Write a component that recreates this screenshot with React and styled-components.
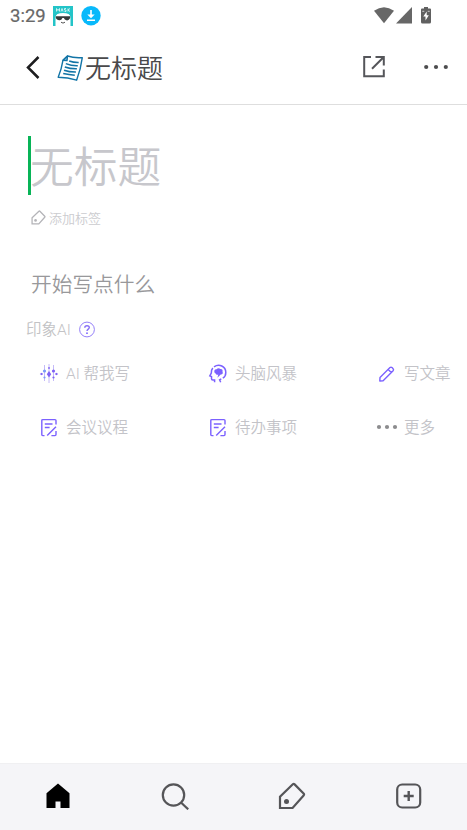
import styled, { createGlobalStyle } from 'styled-components';
import React from 'react';

const TagIcon = ({ size, color, stroke = 2.2 }) => (
  <svg width={size} height={size} viewBox="0 0 28 28" fill="none">
    <path
      d="M2 26V14.6L14.8 2.3Q15.7 1.5 16.6 2.4L25.6 11.6Q26.5 12.6 25.6 13.5L14.6 26Z"
      stroke={color}
      strokeWidth={stroke}
    />
    <circle cx="8.5" cy="19.5" r="2.5" fill={color} />
  </svg>
);

const DotsIcon = ({ width, gap, r, color }) => (
  <svg width={width} height="8" viewBox={`0 0 ${width} 8`} fill={color}>
    {[-1, 0, 1].map((i) => (
      <circle key={i} cx={width / 2 + i * gap} cy="4" r={r} />
    ))}
  </svg>
);

const SparkIcon = () => (
  <svg width="20" height="20" viewBox="0 0 20 20">
    <g stroke="#c4baf8" strokeWidth="1">
      <path d="M5.5 2V18M10 1V20M14.5 2V18" />
    </g>
    <g fill="#7f62f4">
      <path d="M10 8L12.2 11.2L10 14.4L7.8 11.2Z" />
      <path d="M0.8 11L2.6 9.8L4.2 11L2.6 12.2Z" />
      <path d="M15.8 11L17.4 9.8L19.2 11L17.4 12.2Z" />
      <circle cx="14.5" cy="8" r="1.6" />
      <circle cx="14.5" cy="14.5" r="1.1" />
      <circle cx="10" cy="5" r="0.9" />
    </g>
    <g fill="#7a9af8">
      <circle cx="5.5" cy="8" r="1.6" />
      <circle cx="5.5" cy="14.5" r="1.1" />
    </g>
  </svg>
);

const BrainIcon = () => (
  <svg width="20" height="20" viewBox="0 0 20 20" fill="none" stroke="#7b61ff" strokeWidth="1.5">
    <path d="M6.6 19.2V17H4.8Q3.5 17 3.5 15.5V13.5L1.8 12.8L3.3 10Q3.2 7 4.8 5.1M6 3.9C11 0.3 17.8 3.3 17.8 9.5C17.8 12.3 16.6 14.2 14.8 15.2M13.3 15.9L11.6 16.8L12.7 19.2" />
    <path
      d="M6.4 9C5.8 7.1 7.4 5.9 8.6 6.3C9.6 4.9 11.6 5.1 12.3 6.1C14 5.8 15.1 7.3 14.5 8.7C15.4 10.2 14.2 11.8 12.7 11.5L9.4 14.8L10.3 11.6C9 12.1 7.9 11.4 7.9 10.5C7 10.5 6.5 9.9 6.4 9Z"
      fill="#7b61ff"
      stroke="none"
    />
  </svg>
);

const NoteIcon = () => (
  <svg width="18" height="20" viewBox="0 0 18 20" fill="none" stroke="#7b61ff" strokeWidth="1.4">
    <path d="M4.5 18.6H2.8Q1.8 18.6 1.8 17.6V3.6Q1.8 2.6 2.8 2.6H15Q16 2.6 16 3.6V7.4" />
    <path d="M4.8 7H12.5M4.8 10.5H9.6M7.2 18.6L16 9.8M11.4 18.6H15Q16 18.6 16 17.6V14" />
  </svg>
);

const PencilIcon = () => (
  <svg width="18" height="20" viewBox="0 0 18 20" fill="none" stroke="#7b61ff" strokeWidth="1.4" strokeLinejoin="round">
    <path d="M2 14.6L12 4.6Q13 3.7 14 4.6L15.1 5.7Q16 6.7 15.1 7.7L5.1 17.7L1.8 18ZM10.2 6.4L13.3 9.5" />
  </svg>
);

const HelpIcon = () => (
  <svg width="18" height="18" viewBox="0 0 18 18" fill="none" stroke="#8870f7">
    <circle cx="9" cy="9.5" r="7.4" strokeWidth="0.9" />
    <path d="M6.8 7.7C6.8 6.4 7.7 5.7 9 5.7S11.3 6.5 11.3 7.6C11.3 9 9 9.2 9 10.9" strokeWidth="1.4" />
    <circle cx="9" cy="13.2" r="0.9" fill="#7b61ff" stroke="none" />
  </svg>
);

const MemoIcon = () => (
  <svg width="28" height="28" viewBox="0 0 28 28" fill="none" stroke="#1274a6" strokeWidth="1.4" strokeLinejoin="round">
    <path d="M10.5 2Q17 4.2 25.3 3.6Q23.8 15 19.6 26.2Q11 23.2 1.2 23.2Q4.6 15 6 6.2Z" />
    <path d="M10.5 2L10 6.6L6 6.2Z" fill="#8fc5de" />
    <path d="M12.2 7Q16.5 8.6 21.7 8.5M8.8 9.6Q14.5 11.9 20.8 11.7M7.8 13Q13.5 15 19.9 14.8M7 16.2Q12.5 18.1 18.9 18M6.2 19.4Q12 20.7 17.8 21.2" strokeWidth="1.5" />
  </svg>
);

const ACTIONS = [
  { label: 'AI 帮我写', icon: <SparkIcon /> },
  { label: '头脑风暴', icon: <BrainIcon /> },
  { label: '写文章', icon: <PencilIcon /> },
  { label: '会议议程', icon: <NoteIcon /> },
  { label: '待办事项', icon: <NoteIcon /> },
  { label: '更多', icon: <DotsIcon width={24} gap={8} r={2.1} color="#8c8c8e" /> },
];

const App = () => {
  return (
    <>
      <GlobalStyle />
      <Screen>
        <StatusBar>
          <Clock>3:29</Clock>
          <svg width="20" height="20" viewBox="0 0 20 20">
            <path d="M0 0H20V20H17.5V11Q17 7 10 7T2.5 11V20H0Z" fill="#23c4c8" />
            <path d="M3 20V11Q5 6 6 9Q10 7 14 9Q15 6 17 11V20Z" fill="#fff" />
            <path d="M3.5 5.5V2.5L5 4.5L6.5 2.5V5.5M8 5.5L9 2.5L10 5.5M13 2.5H11.5V4H13V5.5H11.5M15 2.5V5.5M17 2.5L15 4L17 5.5" stroke="#d7f5f5" strokeWidth="0.9" fill="none" />
            <path d="M2.8 10.2H17.2V12Q15.8 14.8 13.4 14.3Q11.4 14 10.9 12H9.4Q8.5 14.7 6 14.3Q3.6 14 2.8 12Z" fill="#343b3c" />
            <path d="M8 16.2Q10 18 12 16.2" stroke="#555" fill="none" />
          </svg>
          <svg width="20" height="20" viewBox="0 0 20 20" fill="none" stroke="#fff">
            <circle cx="10" cy="9.7" r="9.7" fill="#08b9fb" stroke="none" />
            <path d="M10 4V10.5M6 14.2H14" strokeWidth="1.6" />
            <path d="M6.3 8.5H13.7L10 12.2Z" fill="#fff" stroke="none" />
          </svg>
          <Signals>
            <svg width="20" height="17" viewBox="0 0 20 17" fill="#676767">
              <path d="M0 3.8Q10-3.2 20 3.8L10 16.2Z" />
            </svg>
            <svg width="16" height="17" viewBox="0 0 16 17" fill="#676767">
              <path d="M16 0V16.5H0Z" />
            </svg>
            <Battery width="10" height="17" viewBox="0 0 10 17">
              <path d="M0 2.5Q0 1.5 1 1.5H3V0H7V1.5H9Q10 1.5 10 2.5V15Q10 16.5 8.5 16.5H1.5Q0 16.5 0 15Z" fill="#606060" />
              <path d="M1.3 4.3H3.3M6.7 4.3H8.7" stroke="#ccc" />
              <path d="M5.7 4.5L2.3 9.6H4.5V13.5L7.8 8.2H5.7Z" fill="#fff" />
            </Battery>
          </Signals>
        </StatusBar>

        <Header>
          <svg width="14" height="24" viewBox="0 0 14 24" fill="none" stroke="#1d1d1f" strokeWidth="2.5">
            <path d="M12.5 1L2 11.5L12.5 22" />
          </svg>
          <NoteName>
            <MemoIcon />
            <NoteTitle>无标题</NoteTitle>
          </NoteName>
          <HeaderActions>
            <svg width="22" height="22" viewBox="0 0 22 22" fill="none" stroke="#55565a" strokeWidth="2">
              <path d="M8 1H1.2V20.2H20.8V13.5M12.5 1H20.8V9.5M20.5 1.3L9 12.7" />
            </svg>
            <DotsIcon width={26} gap={9.8} r={2.1} color="#4c4c4e" />
          </HeaderActions>
        </Header>

        <Editor>
          <TitleInput>无标题</TitleInput>
          <AddTag>
            <TagIcon size={15} color="#b4b4b8" stroke={2.4} />
            添加标签
          </AddTag>
          <Placeholder>开始写点什么</Placeholder>
          <AiHeading>
            <ActionLabel>印象AI</ActionLabel>
            <HelpIcon />
          </AiHeading>
          <ActionGrid>
            {ACTIONS.map((action) => (
              <Action key={action.label}>
                <ActionIcon>{action.icon}</ActionIcon>
                <ActionLabel>{action.label}</ActionLabel>
              </Action>
            ))}
          </ActionGrid>
        </Editor>

        <BottomNav>
          <NavItem>
            <svg width="28" height="28" viewBox="0 0 28 28">
              <path d="M2.5 11.2L14 1.5L25.5 11.2V26H16.5V19.5H11.5V26H2.5Z" fill="#000" />
            </svg>
          </NavItem>
          <NavItem>
            <svg width="28" height="28" viewBox="0 0 28 28" fill="none" stroke="#555558" strokeWidth="2.2">
              <circle cx="12.5" cy="13" r="10.7" />
              <path d="M20 20.5L27.2 27.3" />
            </svg>
          </NavItem>
          <NavItem>
            <TagIcon size={28} color="#555558" />
          </NavItem>
          <NavItem>
            <svg width="28" height="28" viewBox="0 0 28 28" fill="none" stroke="#555558" strokeWidth="2.2">
              <rect x="2.2" y="2.5" width="23" height="23" rx="5" />
              <path d="M13.7 9V19M8.7 14H18.7" strokeWidth="2.4" />
            </svg>
          </NavItem>
        </BottomNav>
      </Screen>
    </>
  );
};

export default App;

// Styled components
const GlobalStyle = createGlobalStyle`
  * { box-sizing: border-box; }
  body {
    margin: 0;
    background: #fff;
    font-family: Roboto, "Noto Sans CJK SC", sans-serif;
  }
  svg {
    display: block;
    flex-shrink: 0;
  }
`;

const Screen = styled.div`
  width: 100%;
  height: 100vh;
  display: flex;
  flex-direction: column;
  overflow: hidden;
  background: #fff;
`;

const StatusBar = styled.div`
  height: 32px;
  padding: 0 36px 0 10px;
  display: flex;
  align-items: center;
  gap: 8px;
  flex-shrink: 0;
`;

const Clock = styled.span`
  width: 35px;
  font-size: 18.5px;
  font-weight: 400;
  line-height: 32px;
  color: #686868;
  -webkit-text-stroke: 0.2px #686868;
`;

const Signals = styled.div`
  display: flex;
  align-items: center;
  gap: 2px;
  margin-left: auto;
  padding-bottom: 2px;
`;

const Battery = styled.svg`
  margin-left: 7px;
`;

const Header = styled.header`
  height: 73px;
  padding: 0 18px 0 26px;
  display: flex;
  align-items: center;
  flex-shrink: 0;
  border-bottom: 1px solid #dedede;
`;

const NoteName = styled.div`
  display: flex;
  align-items: center;
  margin-left: 17px;
`;

const NoteTitle = styled.h1`
  margin: 0;
  padding-top: 2px;
  font-size: 26px;
  font-weight: 350;
  line-height: 36px;
  color: #49494b;
`;

const HeaderActions = styled.div`
  display: flex;
  align-items: center;
  gap: 38px;
  margin-left: auto;
  padding-bottom: 2px;
`;

const Editor = styled.main`
  flex: 1;
  padding: 31px 0 0 26px;
`;

const TitleInput = styled.div`
  height: 59px;
  margin-left: 2px;
  border-left: 3px solid #08b457;
  font-size: 43.7px;
  font-weight: 350;
  line-height: 65px;
  text-indent: -1px;
  color: #c7c7cc;
`;

const AddTag = styled.div`
  display: flex;
  align-items: center;
  gap: 3px;
  height: 21px;
  margin: 12px 0 0 5px;
  font-size: 13px;
  font-weight: 350;
  color: #cccccf;
`;

const Placeholder = styled.p`
  margin: 41px 0 0 5px;
  font-size: 20.7px;
  font-weight: 350;
  line-height: 32px;
  color: #98989b;
`;

const AiHeading = styled.div`
  display: flex;
  align-items: center;
  gap: 7px;
  height: 24px;
  margin-top: 16px;
  font-size: 15.5px;
  font-weight: 350;
  color: #c3c3c5;
`;

const ActionGrid = styled.div`
  display: grid;
  grid-template-columns: repeat(3, 169px);
  grid-auto-rows: 54px;
  margin-top: 5px;
`;

const Action = styled.div`
  display: flex;
  align-items: center;
  gap: 6px;
  padding-left: 12px;
  font-size: 15.5px;
  font-weight: 350;
  white-space: nowrap;
  color: #c3c3c8;
`;

const ActionIcon = styled.span`
  width: 22px;
  display: flex;
  justify-content: center;
`;

const ActionLabel = styled.span`
  padding-bottom: 2px;
`;

const BottomNav = styled.nav`
  height: 67px;
  padding-bottom: 2px;
  display: grid;
  grid-template-columns: repeat(4, 1fr);
  flex-shrink: 0;
  background: #f5f5f8;
  border-top: 1px solid #f0f0f2;
`;

const NavItem = styled.div`
  display: flex;
  align-items: center;
  justify-content: center;
`;
